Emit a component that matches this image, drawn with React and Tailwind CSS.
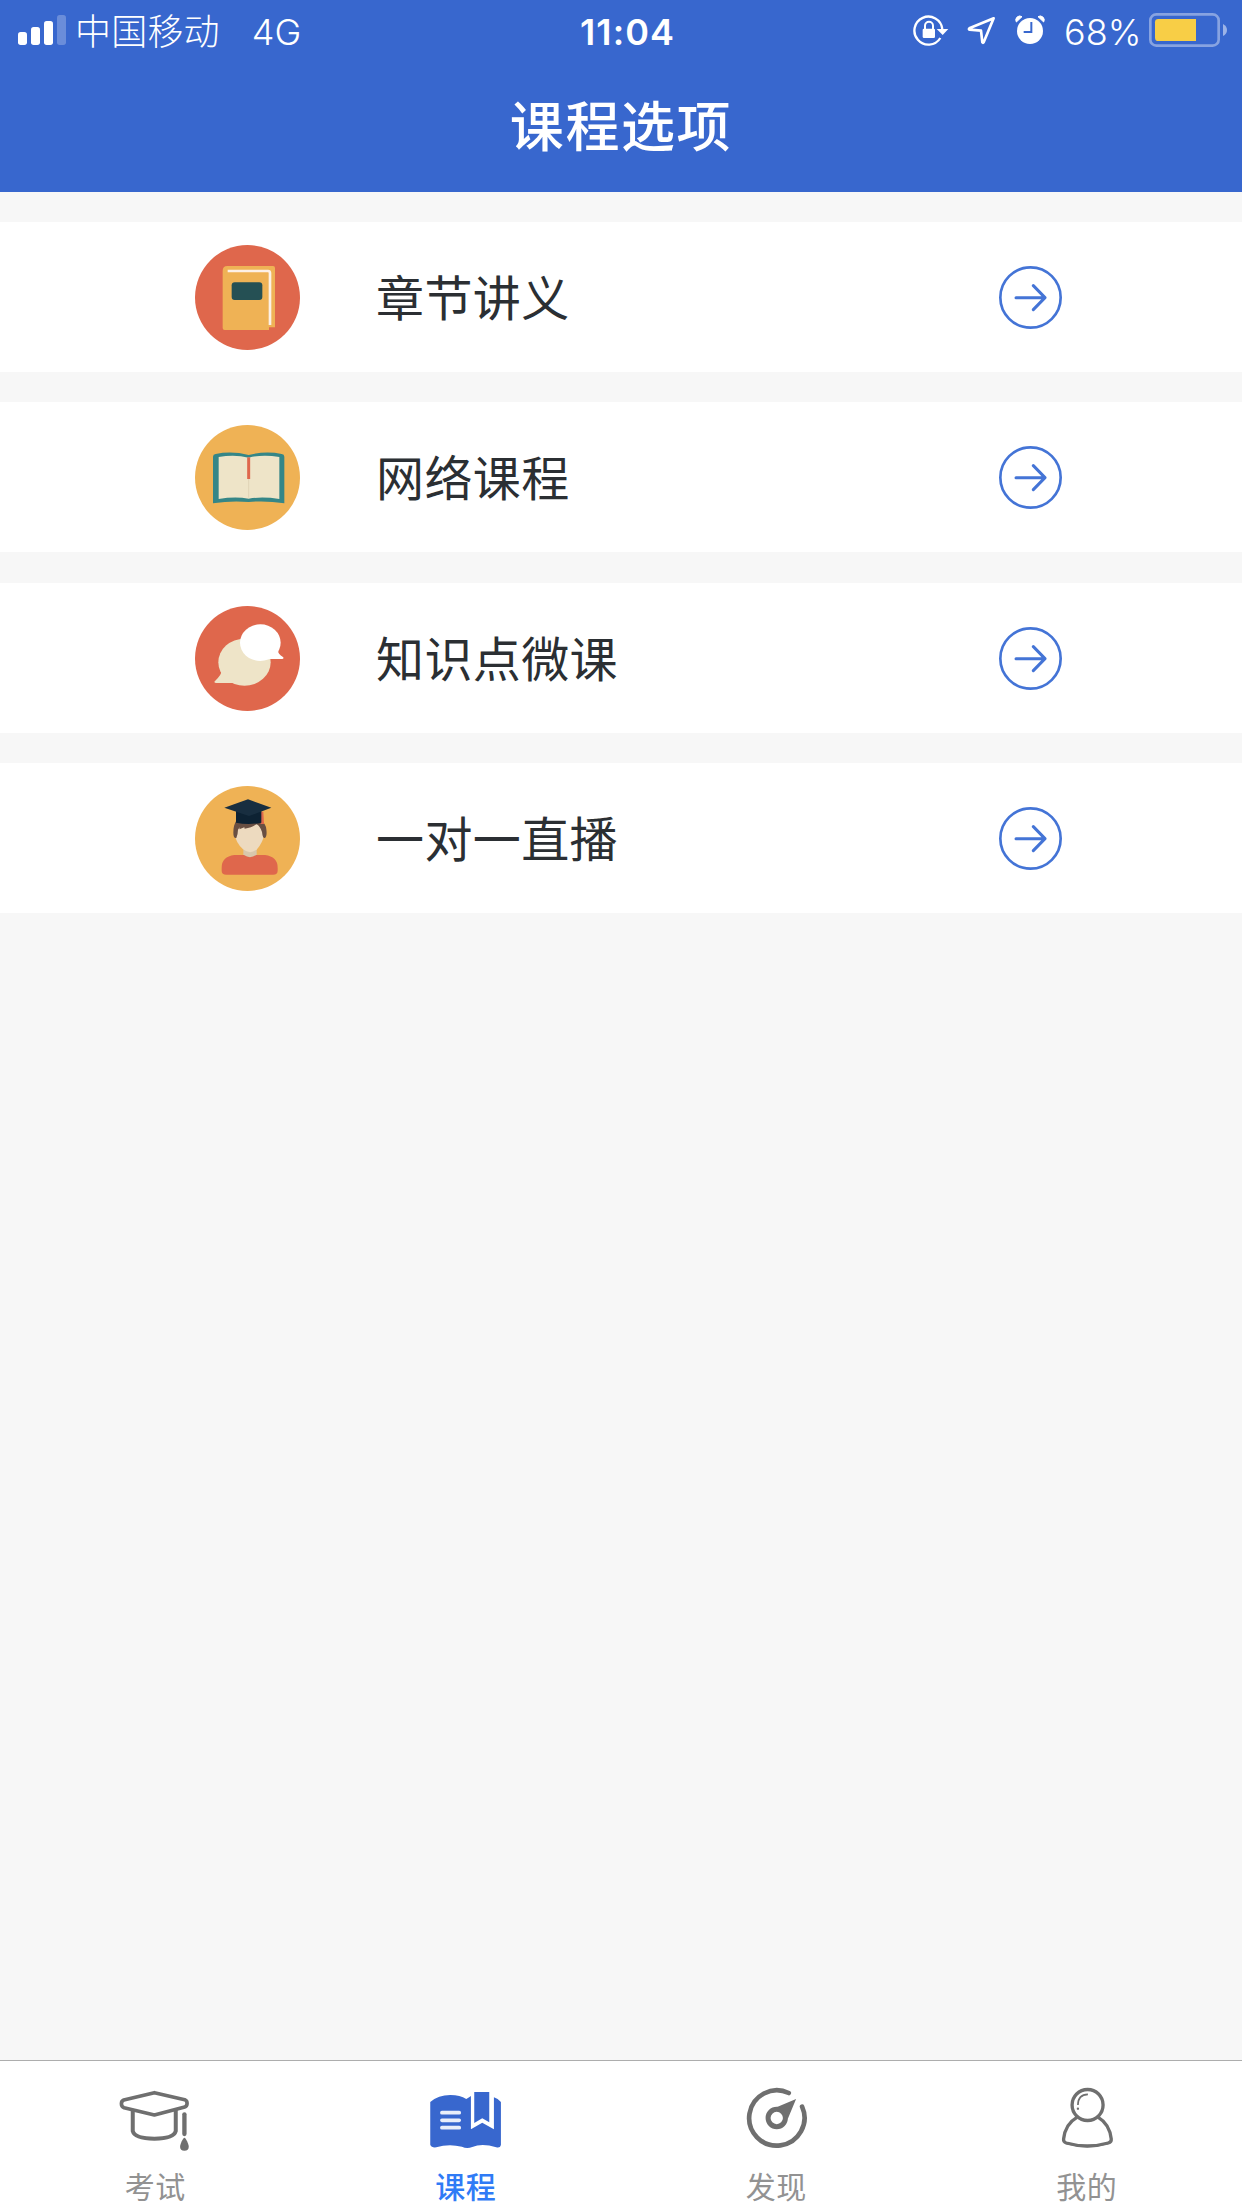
import React from "react";

const SignalIcon = () => (
  <svg viewBox="54 0 144 192" className="w-12 h-16 shrink-0" fill="#fff">
    <rect x="54" y="96" width="27" height="39" rx="8" />
    <rect x="93" y="81" width="27" height="54" rx="8" />
    <rect x="132" y="63" width="27" height="72" rx="8" />
    <rect x="171" y="45" width="27" height="90" rx="8" opacity="0.25" />
  </svg>
);

const RotationLockIcon = () => (
  <svg viewBox="36 0 114 192" className="w-[38px] h-16 shrink-0">
    <path d="M121 114 A42 42 0 1 1 127 87" fill="none" stroke="#fff" strokeWidth="7" />
    <path d="M110 87 H145 L128 105 Z" fill="#fff" />
    <rect x="68" y="86" width="37" height="28" rx="4" fill="#fff" />
    <path d="M75 88 V77 a12 12 0 0 1 24 0 V88" fill="none" stroke="#fff" strokeWidth="6" />
  </svg>
);

const LocationIcon = () => (
  <svg viewBox="198 0 93 192" className="w-[31px] h-16 shrink-0">
    <path
      d="M281 55 L208 85 Q205 88 209 89 L243 92 L247 127 Q249 130 251 127 Z"
      fill="none"
      stroke="#fff"
      strokeWidth="8"
      strokeLinejoin="round"
    />
  </svg>
);

const AlarmIcon = () => (
  <svg viewBox="342 0 96 192" className="w-8 h-16 shrink-0">
    <circle cx="390" cy="93" r="39" fill="#fff" />
    <path d="M349 66 A12 12 0 0 1 366 50 Z" fill="#fff" stroke="#fff" strokeWidth="3" strokeLinejoin="round" />
    <path d="M431 66 A12 12 0 0 0 414 50 Z" fill="#fff" stroke="#fff" strokeWidth="3" strokeLinejoin="round" />
    <path d="M394 66 V96 H371" fill="none" stroke="#3867ce" strokeWidth="6" />
  </svg>
);

const BatteryIcon = () => (
  <svg viewBox="744 0 240 192" className="w-20 h-16 shrink-0">
    <rect x="751" y="43" width="205" height="94" rx="18" fill="none" stroke="#fff" strokeOpacity="0.4" strokeWidth="8" />
    <path d="M888 57 V123 H775 Q765 123 765 113 V67 Q765 57 775 57 Z" fill="#f8ce46" />
    <path d="M969 72 Q981 78 981 90 Q981 102 969 108 Z" fill="#fff" fillOpacity="0.5" />
  </svg>
);

const BookIcon = () => (
  <svg viewBox="0 0 315 315" className="w-[105px] h-[105px]">
    <circle cx="157.500" cy="157.500" r="157.500" fill="#df674c" />
    <path d="M97 63 H234 Q240 63 240 69 V247 H222 V255 H89 Q83 255 83 249 V78 Q83 63 97 63 Z" fill="#efb255" />
    <path d="M98 78 H219 Q225 78 225 84 V240" fill="none" stroke="#fdf0e6" strokeWidth="8" />
    <rect x="110" y="112" width="92" height="53" rx="9" fill="#255054" />
  </svg>
);

const OpenBookIcon = () => (
  <svg viewBox="0 0 315 315" className="w-[105px] h-[105px]">
    <circle cx="157.500" cy="157.500" r="157.500" fill="#efb255" />
    <path
      d="M54 95 Q54 88 62 87 Q110 77 161 90 Q212 77 260 87 Q268 88 268 95 V235 Q212 226 161 231 Q110 226 54 235 Z"
      fill="#358687"
    />
    <path d="M71 96 Q120 88 161 98 Q202 88 253 96 V222 Q202 214 161 221 Q120 214 71 222 Z" fill="#eee4c8" />
    <path d="M161 98 V218" stroke="#dfd4b6" strokeWidth="3" />
    <path d="M161 97 V162" stroke="#df674c" strokeWidth="9" />
  </svg>
);

const ChatIcon = () => (
  <svg viewBox="0 0 315 315" className="w-[105px] h-[105px]">
    <circle cx="157.500" cy="157.500" r="157.500" fill="#df674c" />
    <ellipse cx="148.500" cy="168.500" rx="78.500" ry="70.500" fill="#eee4c8" />
    <path d="M78 196 Q82 205 58 227 Q58 231 64 231 H120 Z" fill="#eee4c8" />
    <ellipse cx="196" cy="110" rx="61" ry="55" fill="#fff" />
    <path d="M250 134 Q247 142 265 154 Q267 159 262 159 H215 Z" fill="#fff" />
  </svg>
);

const StudentIcon = () => (
  <svg viewBox="0 0 315 315" className="w-[105px] h-[105px]">
    <circle cx="157.500" cy="157.500" r="157.500" fill="#efb255" />
    <path d="M145 190 H185 V210 Q165 222 145 210 Z" fill="#d8c7ac" />
    <path d="M118 207 H147 Q165 220 183 207 H210 Q248 212 248 245 V254 Q248 266 234 266 H94 Q80 266 80 254 V245 Q80 212 118 207 Z" fill="#df674c" />
    <path d="M121 125 Q162 90 207 125 V148 Q203 170 186 190 Q165 207 144 190 Q122 170 121 148 Z" fill="#eddabf" />
    <path
      d="M123 106 Q115 118 115 140 Q115 158 124 156 Q129 142 129 131 L134 124 L133 130 L148 124 L149 128 Q170 126 184 115 Q194 118 201 138 Q203 157 209 156 Q217 152 214 130 Q212 113 200 106 Z"
      fill="#694f42"
    />
    <path d="M198 77 H205 L207 114 H197 Z" fill="#df674c" />
    <path d="M123 72 H199 V110 Q161 118 123 110 Z" fill="#0d2233" />
    <path d="M159 40 L229 65 L162 90 L88 65 Z" fill="#182e40" />
  </svg>
);

const ArrowIcon = () => (
  <svg viewBox="57 77 189 189" className="w-[63px] h-[63px]" fill="none" stroke="#4474d6">
    <circle cx="151.500" cy="171.500" r="90.500" strokeWidth="8" />
    <path d="M108 172 H194 M160 136 L195 172 L160 208" strokeWidth="9" strokeLinecap="round" strokeLinejoin="round" />
  </svg>
);

const ExamIcon = () => (
  <svg viewBox="87.750 105 216 198" className="w-[72px] h-[66px]" fill="none" stroke="#6f6f6f">
    <path
      d="M194 128 L285 149 Q292 152 292 160 Q292 169 285 171 L194 195 L103 173 Q95 170 95 161 Q95 153 102 150 Z"
      strokeWidth="11"
      strokeLinejoin="round"
    />
    <path d="M129 180 V243 Q135 266 194 266 Q252 266 258 243 V180" strokeWidth="12" />
    <path d="M284 193 V252" strokeWidth="13" strokeLinecap="round" />
    <path d="M284 263 C288 263 297 282 297 290 Q297 302 284 302 Q271 302 271 290 C271 282 280 263 284 263 Z" fill="#6f6f6f" stroke="none" />
  </svg>
);

const CourseIcon = () => (
  <svg viewBox="89.250 105 216 198" className="w-[72px] h-[66px]">
    <path
      d="M90 156 Q114 135 150 135 Q180 135 198 147 Q206 143 212 138 V238 L246 218 L281 238 V142 Q296 147 302 156 V285 Q300 295 288 292 Q246 279 216 291 Q200 298 185 290 Q145 280 108 292 Q94 294 90 284 Z"
      fill="#3867ce"
    />
    <path d="M222 126 H267 V217 L246 205 L222 219 Z" fill="#3867ce" />
    <path d="M125 188 H177 M125 211 H177 M125 233 H177" stroke="#e9eefa" strokeWidth="11" strokeLinecap="round" />
  </svg>
);

const DiscoverIcon = () => (
  <svg viewBox="90.750 105 216 198" className="w-[72px] h-[66px]" fill="none" stroke="#6f6f6f">
    <path d="M237 129 A83 83 0 1 0 277 170" strokeWidth="14" strokeLinecap="round" />
    <circle cx="201" cy="204" r="26" strokeWidth="15" />
    <path d="M259 147 L234 207 L225 186 L202 171 Z" fill="#6f6f6f" stroke="none" />
  </svg>
);

const MineIcon = () => (
  <svg viewBox="92.250 105 216 198" className="w-[72px] h-[66px]" fill="none" stroke="#6f6f6f">
    <circle cx="202" cy="165" r="46.500" strokeWidth="10" />
    <path d="M173 165 Q173 134 203 133" strokeWidth="5" />
    <circle cx="173" cy="176" r="3.500" fill="#6f6f6f" stroke="none" />
    <path
      d="M170 202 Q135 222 130 267 Q129 276 138 279 Q201 297 264 279 Q274 276 273 267 Q268 222 234 202"
      strokeWidth="10"
    />
    <path d="M134 275 Q201 296 269 275 L264 283 Q201 301 138 283 Z" fill="#6f6f6f" stroke="none" />
  </svg>
);

const cursos = [
  { nombre: "章节讲义", Icon: BookIcon, margen: "mt-[30px]" },
  { nombre: "网络课程", Icon: OpenBookIcon, margen: "mt-[30px]" },
  { nombre: "知识点微课", Icon: ChatIcon, margen: "mt-[31px]" },
  { nombre: "一对一直播", Icon: StudentIcon, margen: "mt-[30px]" },
];

const tabs = [
  { nombre: "考试", Icon: ExamIcon },
  { nombre: "课程", Icon: CourseIcon, activo: true },
  { nombre: "发现", Icon: DiscoverIcon },
  { nombre: "我的", Icon: MineIcon },
];

const StatusBar = () => (
  <div className="flex h-16 pl-[18px] pr-[14px] text-[36px] leading-[62px]">
    <div className="flex w-[562px]">
      <SignalIcon />
      <span className="ml-[9px] pt-px font-light tracking-[0.2px]">中国移动</span>
      <span className="ml-[32px] pt-px font-light">4G</span>
    </div>
    <span className="flex-1 pt-px font-semibold tracking-[1.1px]">11:04</span>
    <div className="flex">
      <RotationLockIcon />
      <span className="w-4" />
      <LocationIcon />
      <span className="w-[17px]" />
      <AlarmIcon />
      <span className="ml-[18px] w-[84px] pt-px font-light">68%</span>
      <BatteryIcon />
    </div>
  </div>
);

const App = () => {
  return (
    <div className="flex flex-col w-[1242px] h-[2208px] overflow-hidden bg-[#f7f7f7] font-['Inter','Noto_Sans_CJK_SC',sans-serif]">
      <header className="h-48 bg-[#3867ce] text-white">
        <StatusBar />
        <h1 className="text-center text-[54px] leading-[128px] font-medium tracking-[1.6px]">课程选项</h1>
      </header>
      <main className="flex-1">
        {cursos.map(({ nombre, Icon, margen }) => (
          <button key={nombre} className={`flex items-center w-full h-[150px] pl-[195px] pr-[180px] bg-white ${margen}`}>
            <Icon />
            <span className="ml-[76px] flex-1 pt-1 text-left text-[48px] leading-[72px] tracking-[0.4px] text-[#2b2f33]">
              {nombre}
            </span>
            <ArrowIcon />
          </button>
        ))}
      </main>
      <nav className="grid grid-cols-4 h-[148px] border-t border-[#adadad] bg-white">
        {tabs.map(({ nombre, Icon, activo }) => (
          <button key={nombre} className="flex flex-col items-center pt-6">
            <Icon />
            <span
              className={`mt-[14px] text-[30px] leading-[44px] tracking-[0.4px] ${
                activo ? "font-medium text-[#2f7bf6]" : "text-[#929292]"
              }`}
            >
              {nombre}
            </span>
          </button>
        ))}
      </nav>
    </div>
  );
};

export default App;
